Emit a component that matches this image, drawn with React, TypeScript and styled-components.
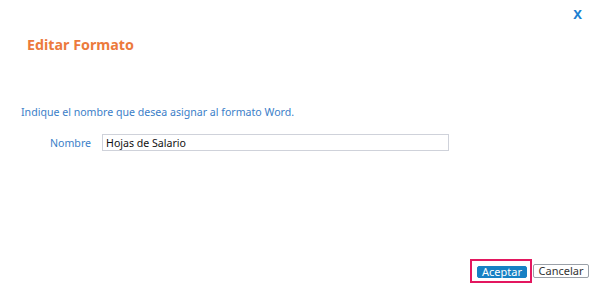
import * as React from 'react';
import styled, { createGlobalStyle } from 'styled-components';

const GlobalStyle = createGlobalStyle`
  html, body {
    margin: 0;
    padding: 0;
    background: #ffffff;
  }
  body {
    font-family: 'Noto Sans', 'Open Sans', Arial, sans-serif;
  }
`;

const Dialog = styled.div`
  box-sizing: border-box;
  width: 593px;
  height: 286px;
  display: flex;
  flex-direction: column;
  padding: 5px 4px 3px 21px;
  background: #ffffff;
`;

const TopBar = styled.div`
  display: flex;
  justify-content: flex-end;
  height: 18px;
  padding-right: 7px;
`;

const CloseButton = styled.button`
  border: none;
  background: none;
  padding: 0;
  color: #1c7fd1;
  font-family: 'Noto Sans', sans-serif;
  font-weight: 700;
  font-size: 13px;
  line-height: 16px;
  cursor: pointer;
`;

const Title = styled.h2`
  margin: 12px 0 0 6px;
  color: #ec7a3c;
  font-size: 14.3px;
  font-weight: 700;
  line-height: 20px;
`;

const Intro = styled.p`
  margin: 50px 0 0;
  color: #3a7ec8;
  font-size: 10.6px;
  line-height: 14px;
`;

const FieldRow = styled.div`
  display: flex;
  align-items: center;
  gap: 11px;
  margin-top: 15px;
  padding-left: 29px;
`;

const Label = styled.label`
  color: #3a7ec8;
  font-size: 10.6px;
`;

const TextInput = styled.input`
  box-sizing: border-box;
  width: 347px;
  height: 17px;
  padding: 0 3px;
  border: 1px solid #cfd2da;
  color: #111111;
  font-family: 'Noto Sans', sans-serif;
  font-size: 10.6px;
  outline: none;
`;

const Footer = styled.div`
  margin-top: auto;
  display: flex;
  justify-content: flex-end;
  align-items: center;
  gap: 1px;
`;

const Highlight = styled.div`
  box-sizing: border-box;
  border: 2px solid #e3175f;
  padding: 5px 3px 3px 5px;
  display: flex;
`;

const ActionButton = styled.button<{ $primary?: boolean }>`
  box-sizing: border-box;
  height: ${({ $primary }) => ($primary ? '12px' : '14px')};
  min-width: ${({ $primary }) => ($primary ? '50px' : '56px')};
  padding: 0 3px;
  border-radius: 2px;
  border: 1px solid ${({ $primary }) => ($primary ? '#1680c4' : '#9aa0a8')};
  background: ${({ $primary }) => ($primary ? '#1680c4' : '#ffffff')};
  color: ${({ $primary }) => ($primary ? '#ffffff' : '#333333')};
  font-family: 'Noto Sans', sans-serif;
  font-size: 11px;
  line-height: 10px;
  cursor: pointer;
`;

const App = () => {
  const [name, setName] = React.useState('Hojas de Salario');

  return (
    <>
      <GlobalStyle />
      <Dialog>
        <TopBar>
          <CloseButton type="button">X</CloseButton>
        </TopBar>
        <Title>Editar Formato</Title>
        <Intro>Indique el nombre que desea asignar al formato Word.</Intro>
        <FieldRow>
          <Label htmlFor="nombre">Nombre</Label>
          <TextInput
            id="nombre"
            value={name}
            onChange={(e) => setName(e.target.value)}
          />
        </FieldRow>
        <Footer>
          <Highlight>
            <ActionButton type="button" $primary>
              Aceptar
            </ActionButton>
          </Highlight>
          <ActionButton type="button">Cancelar</ActionButton>
        </Footer>
      </Dialog>
    </>
  );
};

export default App;
